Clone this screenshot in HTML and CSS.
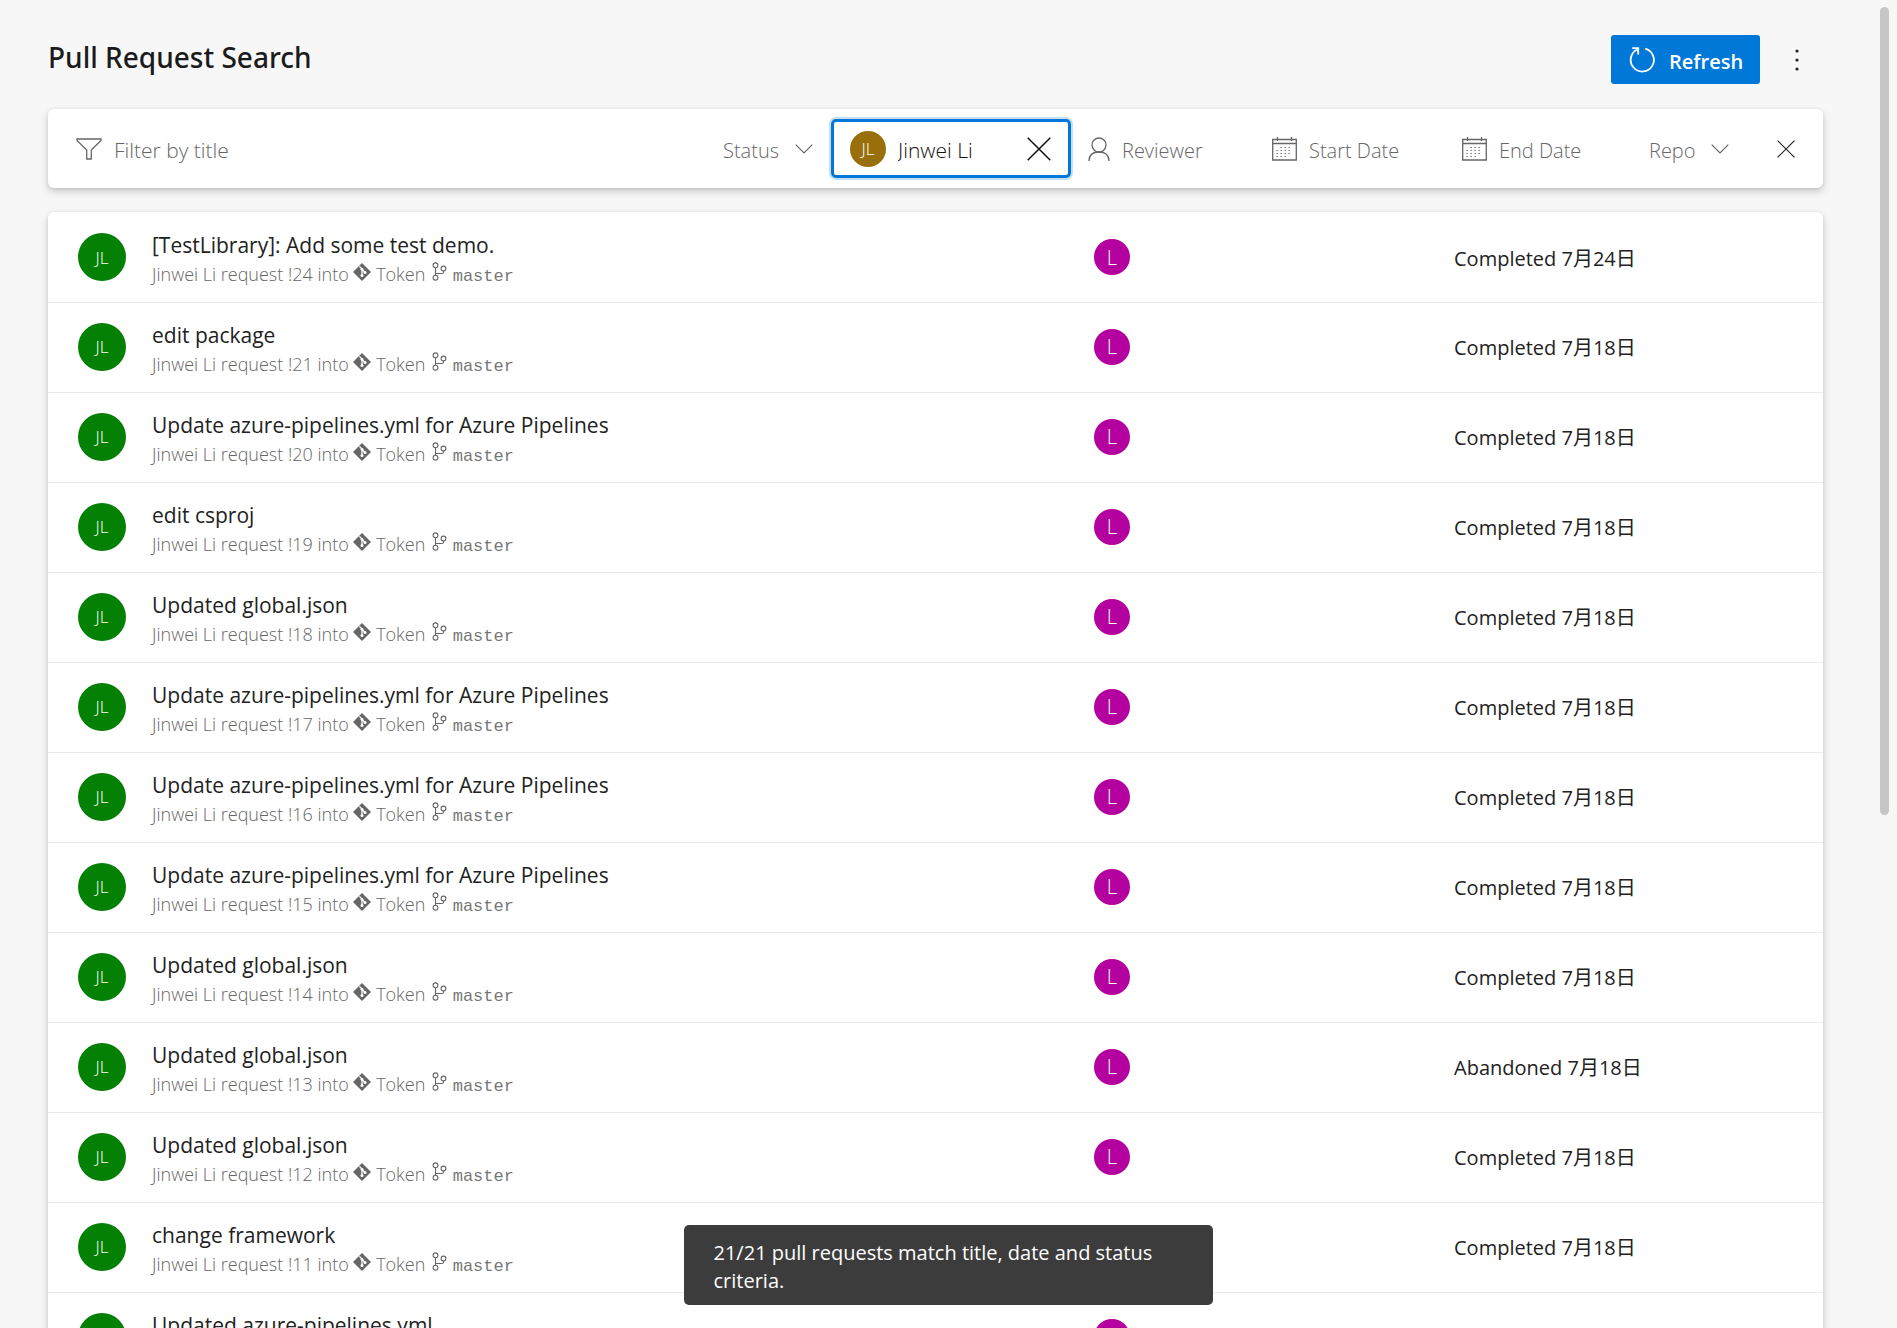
FILE: index.html
```html
<!DOCTYPE html>
<html lang="en">
<head>
<meta charset="utf-8">
<title>Pull Request Search</title>
<link rel="stylesheet" href="styles.css">
</head>
<body>
<svg class="sprite" aria-hidden="true">
  <symbol id="git" viewBox="0 0 18 18"><path fill="currentColor" d="M9 0 18 9 9 18 0 9Z"/><path d="M6.4 3.4 9 6v6.600M9 6.500 12 9.200" fill="none" stroke="#fff" stroke-width="1.300"/><circle cx="9" cy="6.300" r="1.400" fill="#fff"/><circle cx="9" cy="12.600" r="1.500" fill="#fff"/><circle cx="12" cy="9.400" r="1.500" fill="#fff"/></symbol>
  <symbol id="branch" viewBox="0 0 15 19"><g fill="none" stroke="currentColor" stroke-width="1.100"><circle cx="3.500" cy="3.300" r="2.400"/><circle cx="3.500" cy="15.700" r="2.400"/><circle cx="11.500" cy="6.500" r="2.400"/><path d="M3.500 5.700v7.600M11.500 8.900v1.200q0 1.400-1.400 1.400H3.500"/></g></symbol>
  <symbol id="chevron" viewBox="0 0 18 10"><path d="M.7.700 9 9 17.300.7" fill="none" stroke="currentColor" stroke-width="1.200"/></symbol>
  <symbol id="cross" viewBox="0 0 24 24"><path d="M.7.700 23.300 23.300M23.300.7.7 23.300" fill="none" stroke="currentColor" stroke-width="1.500"/></symbol>
  <symbol id="calendar" viewBox="0 0 25 24"><path d="M.7 2.500h23.600v20.500H.7zM.7 6.500h23.600M5.500 0v4M19.500 0v4" fill="none" stroke="currentColor" stroke-width="1.300"/><path d="M8.500 10.500h12M4.500 13.500h16M4.500 16.500h16M4.500 19.500h12" fill="none" stroke="currentColor" stroke-width="1.200" stroke-dasharray="1.300 2.700"/></symbol>
</svg>

<main class="page">
  <header class="header">
    <h1 class="heading">Pull Request Search</h1>
    <button class="refresh" type="button">
      <svg width="26" height="26" viewBox="0 0 26 26" fill="none" stroke="currentColor" stroke-width="1.800"><path d="M16.200 1.700A11.600 11.600 0 1 1 8.200 2.500M3.200 1.200h6v6.200"/></svg>
      <span class="refresh-label">Refresh</span>
    </button>
    <button class="more" type="button" aria-label="More options">
      <svg width="4" height="22" viewBox="0 0 4 22" fill="currentColor"><circle cx="2" cy="2" r="1.600"/><circle cx="2" cy="11" r="1.600"/><circle cx="2" cy="20" r="1.600"/></svg>
    </button>
  </header>

  <form class="card filters">
    <label class="field field-title">
      <svg width="26" height="22" viewBox="0 0 26 22" fill="none" stroke="currentColor" stroke-width="1.300"><path d="M1 1h24v1.500L15.300 12v9h-4.600v-9L1 2.500z"/></svg>
      <input type="text" placeholder="Filter by title" aria-label="Filter by title">
    </label>
    <label class="field field-status">
      <select class="select-status" aria-label="Status"><option>Status</option></select>
      <svg class="chevron" width="18" height="10"><use href="#chevron"/></svg>
    </label>
    <div class="field person">
      <span class="avatar avatar-gold">JL</span>
      <input type="text" value="Jinwei Li" aria-label="Creator">
      <button class="clear" type="button" aria-label="Clear creator"><svg width="24" height="24"><use href="#cross"/></svg></button>
    </div>
    <label class="field field-reviewer">
      <svg width="22" height="24" viewBox="0 0 22 24" fill="none" stroke="currentColor" stroke-width="1.300"><circle cx="11" cy="8" r="7"/><path d="M1 24C1 18 5 15 11 15s10 3 10 9"/></svg>
      <input type="text" placeholder="Reviewer" aria-label="Reviewer">
    </label>
    <label class="field field-start">
      <svg width="25" height="24"><use href="#calendar"/></svg>
      <input type="text" placeholder="Start Date" aria-label="Start Date">
    </label>
    <label class="field field-end">
      <svg width="25" height="24"><use href="#calendar"/></svg>
      <input type="text" placeholder="End Date" aria-label="End Date">
    </label>
    <label class="field field-repo">
      <select class="select-repo" aria-label="Repo"><option>Repo</option></select>
      <svg class="chevron" width="18" height="10"><use href="#chevron"/></svg>
    </label>
    <button class="reset" type="button" aria-label="Clear filters"><svg width="18" height="18"><use href="#cross"/></svg></button>
  </form>

  <table class="card list" aria-label="Pull requests">
    <colgroup><col><col class="col-reviewer"><col class="col-status"></colgroup>
    <tbody>
    <tr><td><div class="request"><span class="avatar avatar-green">JL</span><div class="summary"><div class="name">[TestLibrary]: Add some test demo.</div><div class="detail">Jinwei Li request !24 into <svg class="git"><use href="#git"/></svg> Token <svg class="branch"><use href="#branch"/></svg> <code>master</code></div></div></div></td><td><span class="avatar avatar-purple">L</span></td><td class="state">Completed 7月24日</td></tr>
    <tr><td><div class="request"><span class="avatar avatar-green">JL</span><div class="summary"><div class="name">edit package</div><div class="detail">Jinwei Li request !21 into <svg class="git"><use href="#git"/></svg> Token <svg class="branch"><use href="#branch"/></svg> <code>master</code></div></div></div></td><td><span class="avatar avatar-purple">L</span></td><td class="state">Completed 7月18日</td></tr>
    <tr><td><div class="request"><span class="avatar avatar-green">JL</span><div class="summary"><div class="name">Update azure-pipelines.yml for Azure Pipelines</div><div class="detail">Jinwei Li request !20 into <svg class="git"><use href="#git"/></svg> Token <svg class="branch"><use href="#branch"/></svg> <code>master</code></div></div></div></td><td><span class="avatar avatar-purple">L</span></td><td class="state">Completed 7月18日</td></tr>
    <tr><td><div class="request"><span class="avatar avatar-green">JL</span><div class="summary"><div class="name">edit csproj</div><div class="detail">Jinwei Li request !19 into <svg class="git"><use href="#git"/></svg> Token <svg class="branch"><use href="#branch"/></svg> <code>master</code></div></div></div></td><td><span class="avatar avatar-purple">L</span></td><td class="state">Completed 7月18日</td></tr>
    <tr><td><div class="request"><span class="avatar avatar-green">JL</span><div class="summary"><div class="name">Updated global.json</div><div class="detail">Jinwei Li request !18 into <svg class="git"><use href="#git"/></svg> Token <svg class="branch"><use href="#branch"/></svg> <code>master</code></div></div></div></td><td><span class="avatar avatar-purple">L</span></td><td class="state">Completed 7月18日</td></tr>
    <tr><td><div class="request"><span class="avatar avatar-green">JL</span><div class="summary"><div class="name">Update azure-pipelines.yml for Azure Pipelines</div><div class="detail">Jinwei Li request !17 into <svg class="git"><use href="#git"/></svg> Token <svg class="branch"><use href="#branch"/></svg> <code>master</code></div></div></div></td><td><span class="avatar avatar-purple">L</span></td><td class="state">Completed 7月18日</td></tr>
    <tr><td><div class="request"><span class="avatar avatar-green">JL</span><div class="summary"><div class="name">Update azure-pipelines.yml for Azure Pipelines</div><div class="detail">Jinwei Li request !16 into <svg class="git"><use href="#git"/></svg> Token <svg class="branch"><use href="#branch"/></svg> <code>master</code></div></div></div></td><td><span class="avatar avatar-purple">L</span></td><td class="state">Completed 7月18日</td></tr>
    <tr><td><div class="request"><span class="avatar avatar-green">JL</span><div class="summary"><div class="name">Update azure-pipelines.yml for Azure Pipelines</div><div class="detail">Jinwei Li request !15 into <svg class="git"><use href="#git"/></svg> Token <svg class="branch"><use href="#branch"/></svg> <code>master</code></div></div></div></td><td><span class="avatar avatar-purple">L</span></td><td class="state">Completed 7月18日</td></tr>
    <tr><td><div class="request"><span class="avatar avatar-green">JL</span><div class="summary"><div class="name">Updated global.json</div><div class="detail">Jinwei Li request !14 into <svg class="git"><use href="#git"/></svg> Token <svg class="branch"><use href="#branch"/></svg> <code>master</code></div></div></div></td><td><span class="avatar avatar-purple">L</span></td><td class="state">Completed 7月18日</td></tr>
    <tr><td><div class="request"><span class="avatar avatar-green">JL</span><div class="summary"><div class="name">Updated global.json</div><div class="detail">Jinwei Li request !13 into <svg class="git"><use href="#git"/></svg> Token <svg class="branch"><use href="#branch"/></svg> <code>master</code></div></div></div></td><td><span class="avatar avatar-purple">L</span></td><td class="state">Abandoned 7月18日</td></tr>
    <tr><td><div class="request"><span class="avatar avatar-green">JL</span><div class="summary"><div class="name">Updated global.json</div><div class="detail">Jinwei Li request !12 into <svg class="git"><use href="#git"/></svg> Token <svg class="branch"><use href="#branch"/></svg> <code>master</code></div></div></div></td><td><span class="avatar avatar-purple">L</span></td><td class="state">Completed 7月18日</td></tr>
    <tr><td><div class="request"><span class="avatar avatar-green">JL</span><div class="summary"><div class="name">change framework</div><div class="detail">Jinwei Li request !11 into <svg class="git"><use href="#git"/></svg> Token <svg class="branch"><use href="#branch"/></svg> <code>master</code></div></div></div></td><td><span class="avatar avatar-purple">L</span></td><td class="state">Completed 7月18日</td></tr>
    <tr><td><div class="request"><span class="avatar avatar-green">JL</span><div class="summary"><div class="name">Updated azure-pipelines.yml</div><div class="detail"></div></div></div></td><td><span class="avatar avatar-purple">L</span></td><td></td></tr>
    </tbody>
  </table>
</main>

<div class="toast" role="status">21/21 pull requests match title, date and status criteria.</div>
<div class="scroll-thumb"></div>
</body>
</html>
```

FILE: styles.css
```css
* {
  box-sizing: border-box;
}

body {
  margin: 0;
  height: 100vh;
  overflow: hidden;
  background: #f7f7f7;
  color: #222;
  font-family: "Open Sans", "Noto Sans", "Noto Sans CJK SC", sans-serif;
  font-size: 20px;
  font-weight: 400;
}

svg {
  flex: none;
}

button,
input,
select {
  margin: 0;
  padding: 0;
  border: 0;
  outline: 0;
  background: none;
  color: inherit;
  font: inherit;
}

.sprite {
  display: none;
}

.page {
  padding: 32px 74px 0 48px;
}

.header {
  display: flex;
  align-items: flex-end;
  height: 52px;
}

.heading {
  flex: 1;
  align-self: flex-start;
  margin: 0;
  color: #1b1b1b;
  font-family: "Noto Sans", "Open Sans", sans-serif;
  font-size: 28px;
  font-weight: 500;
  line-height: 50px;
}

.refresh {
  display: flex;
  align-items: center;
  gap: 14px;
  width: 149px;
  height: 49px;
  padding: 0 18px;
  border-radius: 3px;
  background: #0078d7;
  color: #fff;
  font-weight: 600;
}

.refresh-label {
  padding-top: 3px;
}

.more {
  display: flex;
  align-items: center;
  justify-content: center;
  width: 48px;
  height: 49px;
  margin: 0 2px 0 13px;
}

.card {
  border-radius: 6px;
  background: #fff;
  box-shadow: 0 4px 9px rgba(0, 0, 0, 0.16), 0 1px 4px rgba(0, 0, 0, 0.1);
}

.filters {
  display: flex;
  align-items: center;
  height: 79px;
  margin: 25px 0 24px;
  padding: 0 14px 0 28px;
  color: #666;
  font-weight: 300;
}

.field {
  display: flex;
  align-items: center;
  gap: 12px;
}

.field input {
  flex: 1;
  width: 100%;
  min-width: 0;
  padding-top: 3px;
}

.field input::placeholder {
  color: #666;
  opacity: 1;
}

.field select {
  padding-top: 3px;
  appearance: none;
}

.field-title {
  flex: 1;
}

.field-title input,
.person input {
  font-size: 21px;
}

.field-status {
  width: 108px;
}

.select-status {
  width: 60px;
}

.select-repo {
  width: 50px;
}

.person {
  width: 240px;
  height: 59px;
  padding: 0 17px 0 16px;
  border: 3px solid #0078d7;
  border-radius: 5px;
  box-shadow: 0 0 0 2px #c3dff5;
  color: #111;
}

.clear {
  display: flex;
  align-items: center;
}

.field-reviewer {
  width: 201px;
  padding-left: 17px;
}

.field-start {
  width: 190px;
}

.field-end {
  width: 187px;
}

.field-repo {
  width: 113px;
}

.reset {
  display: flex;
  align-items: center;
  justify-content: center;
  width: 47px;
  height: 47px;
  color: #222;
}

.avatar {
  display: flex;
  align-items: center;
  justify-content: center;
  flex: none;
  width: 36px;
  height: 36px;
  border-radius: 50%;
  color: #fff;
  font-weight: 300;
}

.avatar-gold {
  background: #986f0b;
  font-size: 17px;
}

.avatar-green {
  width: 48px;
  height: 48px;
  background: #048004;
  font-size: 17px;
}

.avatar-purple {
  background: #b4009e;
}

.list {
  width: 100%;
  table-layout: fixed;
  border-spacing: 0;
}

.col-reviewer {
  width: 360px;
}

.col-status {
  width: 369px;
}

.list td {
  height: 90px;
  padding: 0;
}

.list tr + tr td {
  padding-bottom: 2px;
  border-top: 1px solid #eaeaea;
}

.request {
  display: flex;
  align-items: center;
  gap: 26px;
  padding-left: 30px;
  white-space: nowrap;
}

.summary {
  padding-top: 4px;
}

.name {
  font-size: 21px;
  line-height: 30px;
}

.detail {
  height: 28px;
  color: #666;
  font-size: 18px;
  font-weight: 300;
  line-height: 28px;
}

.detail code {
  color: #777;
  font-family: "Liberation Mono", monospace;
  font-size: 17px;
}

.git {
  width: 18px;
  height: 18px;
}

.branch {
  width: 15px;
  height: 19px;
  margin: 0 1px 0 2px;
}

.toast {
  position: fixed;
  bottom: 23px;
  left: 50%;
  width: 529px;
  margin-left: -265px;
  padding: 14px 30px 10px;
  border-radius: 5px;
  background: #3c3c3c;
  color: #fff;
  line-height: 28px;
}

.scroll-thumb {
  position: fixed;
  top: 7px;
  right: 8px;
  width: 9px;
  height: 808px;
  border-radius: 5px;
  background: #c6c6c6;
}
```
